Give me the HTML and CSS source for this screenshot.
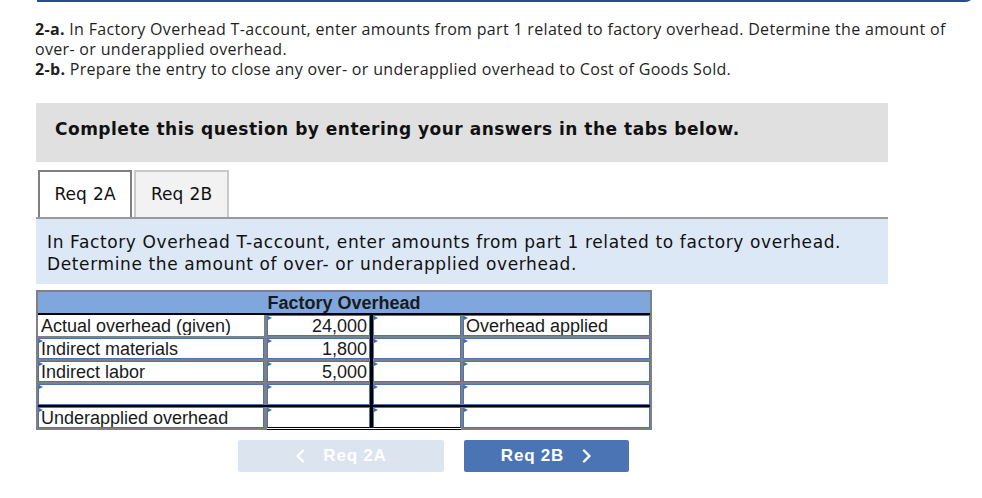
FILE: index.html
```html
<!DOCTYPE html>
<html>
<head>
<meta charset="utf-8">
<link rel="stylesheet" href="styles.css">
</head>
<body>
<div class="topline"></div>
<div class="page">
  <p class="prompt"><b>2-a.</b> In Factory Overhead T-account, enter amounts from part 1 related to factory overhead. Determine the amount of<br>over- or underapplied overhead.<br><b>2-b.</b> Prepare the entry to close any over- or underapplied overhead to Cost of Goods Sold.</p>

  <div class="instructions">Complete this question by entering your answers in the tabs below.</div>

  <div class="tabs">
    <div class="tab active">Req 2A</div>
    <div class="tab">Req 2B</div>
  </div>

  <div class="info">In Factory Overhead T-account, enter amounts from part 1 related to factory overhead.<br>Determine the amount of over- or underapplied overhead.</div>

  <div class="tacct">
    <div class="thead">Factory Overhead</div>
    <div class="hline r-h"></div>
    <div class="hline r-t"></div>
    <div class="vline"></div>
    <div class="dbl"></div>

    <div class="cell plain r1 c1">Actual overhead (given)</div>
    <div class="cell mark num r1 c2">24,000</div>
    <div class="cell mark r1 c3"></div>
    <div class="cell mark r1 c4">Overhead applied</div>

    <div class="cell mark r2 c1">Indirect materials</div>
    <div class="cell mark num r2 c2">1,800</div>
    <div class="cell mark r2 c3"></div>
    <div class="cell mark r2 c4"></div>

    <div class="cell mark r3 c1">Indirect labor</div>
    <div class="cell mark num r3 c2">5,000</div>
    <div class="cell mark r3 c3"></div>
    <div class="cell mark r3 c4"></div>

    <div class="cell mark r4 c1"></div>
    <div class="cell mark r4 c2"></div>
    <div class="cell mark r4 c3"></div>
    <div class="cell mark r4 c4"></div>

    <div class="cell mark r5 c1">Underapplied overhead</div>
    <div class="cell mark r5 c2 last"></div>
    <div class="cell mark r5 c3 last"></div>
    <div class="cell mark r5 c4"></div>
  </div>

  <div class="navs">
    <div class="btn prev">
      <svg width="10" height="14" viewBox="0 0 10 14"><polyline points="8,1.5 2.5,7 8,12.5" fill="none" stroke="#fff" stroke-width="2.4" stroke-linecap="round" stroke-linejoin="round"/></svg>
      <span>Req 2A</span>
    </div>
    <div class="btn next">
      <span>Req 2B</span>
      <svg width="10" height="14" viewBox="0 0 10 14"><polyline points="2,1.5 7.5,7 2,12.5" fill="none" stroke="#fff" stroke-width="2.4" stroke-linecap="round" stroke-linejoin="round"/></svg>
    </div>
  </div>
</div>
</body>
</html>
```

FILE: styles.css
```css
html, body {
  margin: 0;
  padding: 0;
  background: #fff;
}

body {
  width: 982px;
  height: 498px;
  overflow: hidden;
  font-family: "Liberation Sans", Arial, sans-serif;
  color: #1a1a1a;
}

.topline {
  margin-left: 37px;
  width: 933px;
  height: 2px;
  margin-top: -4px;
  border-bottom: 2px solid #2b4e8a;
  border-right: 2px solid #2b4e8a;
  border-bottom-right-radius: 6px;
  padding-top: 2px;
}

.page {
  padding-left: 36px;
  width: 852px;
}

.prompt {
  margin: 17px 0 0 -1px;
  font-family: "Open Sans", "Liberation Sans", sans-serif;
  font-size: 16px;
  letter-spacing: 0.32px;
  line-height: 20px;
  color: #1f1f1f;
  white-space: nowrap;
}

.prompt b {
  font-weight: bold;
}

.instructions {
  margin-top: 24px;
  height: 59px;
  box-sizing: border-box;
  padding: 16px 0 0 19px;
  background: #e0e0e0;
  font-family: "DejaVu Sans", Verdana, sans-serif;
  font-weight: bold;
  font-size: 17px;
  letter-spacing: 0.5px;
  line-height: 20px;
  color: #111;
}

.tabs {
  margin-top: 8px;
  display: flex;
  gap: 2px;
  padding-left: 2px;
  border-bottom: 2px solid #9a9a9a;
  height: 47px;
}

.tab {
  box-sizing: border-box;
  width: 94px;
  height: 47px;
  border: 2px solid #c9c9c9;
  border-bottom: none;
  background: #f2f2f2;
  font-family: "DejaVu Sans", Verdana, sans-serif;
  font-size: 17px;
  line-height: 45px;
  text-align: center;
  color: #111;
  word-spacing: 1px;
}

.tab.active {
  width: 94px;
  background: #fff;
  border-color: #808080;
}

.tab + .tab {
  width: 95px;
}

.info {
  height: 65px;
  box-sizing: border-box;
  padding: 12px 0 0 11px;
  background: #dde8f6;
  font-family: "DejaVu Sans", Verdana, sans-serif;
  font-size: 17px;
  letter-spacing: 0.62px;
  line-height: 22px;
  color: #111;
}

/* T-account */
.tacct {
  margin-top: 6px;
  width: 616px;
  display: grid;
  grid-template-columns: 2px 226px 3px 103px 3px 88px 2px 187px 2px;
  grid-template-rows: 2px 21px 2px 21px 2px 21px 2px 21px 2px 21px 2px 21px 2px;
  background: #808080;
  font-size: 18px;
}

.thead {
  grid-column: 2 / 9;
  grid-row: 2;
  background: #7fa7dd;
  text-align: center;
  font-weight: bold;
  line-height: 22px;
  color: #1a1a1a;
}

.hline {
  grid-column: 2 / 9;
  background: #000;
}

.r-h { grid-row: 3; }
.r-t { grid-row: 11; }

.vline {
  grid-column: 5;
  grid-row: 3 / 13;
  background: #000;
}

.dbl {
  grid-column: 4 / 7;
  grid-row: 13;
  background: #fff;
  border-bottom: 1px solid #000;
}

.cell {
  position: relative;
  background: #fff;
  border: 1px solid #4a72b4;
  line-height: 20px;
  padding: 0 2px;
  white-space: nowrap;
  overflow: hidden;
  color: #1a1a1a;
}

.cell.plain {
  border-color: #fff;
}

.cell.mark::before {
  content: "";
  position: absolute;
  left: 0;
  top: 0;
  border-left: 4px solid #3d6db5;
  border-top: 2.5px solid transparent;
  border-bottom: 2.5px solid transparent;
}

.cell.num {
  text-align: right;
}

.cell.last {
  border-bottom-color: #000;
}

.r1 { grid-row: 4; }
.r2 { grid-row: 6; }
.r3 { grid-row: 8; }
.r4 { grid-row: 10; }
.r5 { grid-row: 12; }

.c1 { grid-column: 2; }
.c2 { grid-column: 4; }
.c3 { grid-column: 6; }
.c4 { grid-column: 8; }

/* navigation buttons */
.navs {
  margin-top: 10px;
  margin-left: 202px;
  display: flex;
  gap: 20px;
}

.btn {
  height: 32px;
  border-radius: 2px;
  display: flex;
  align-items: center;
  justify-content: center;
  gap: 18px;
  color: #fff;
  font-family: "Liberation Sans", Arial, sans-serif;
  font-weight: bold;
  font-size: 17px;
  letter-spacing: 0.8px;
}

.btn svg {
  display: block;
}

.prev {
  width: 206px;
  background: #dbe4ef;
}

.next {
  width: 165px;
  background: #4a74b4;
}
```
